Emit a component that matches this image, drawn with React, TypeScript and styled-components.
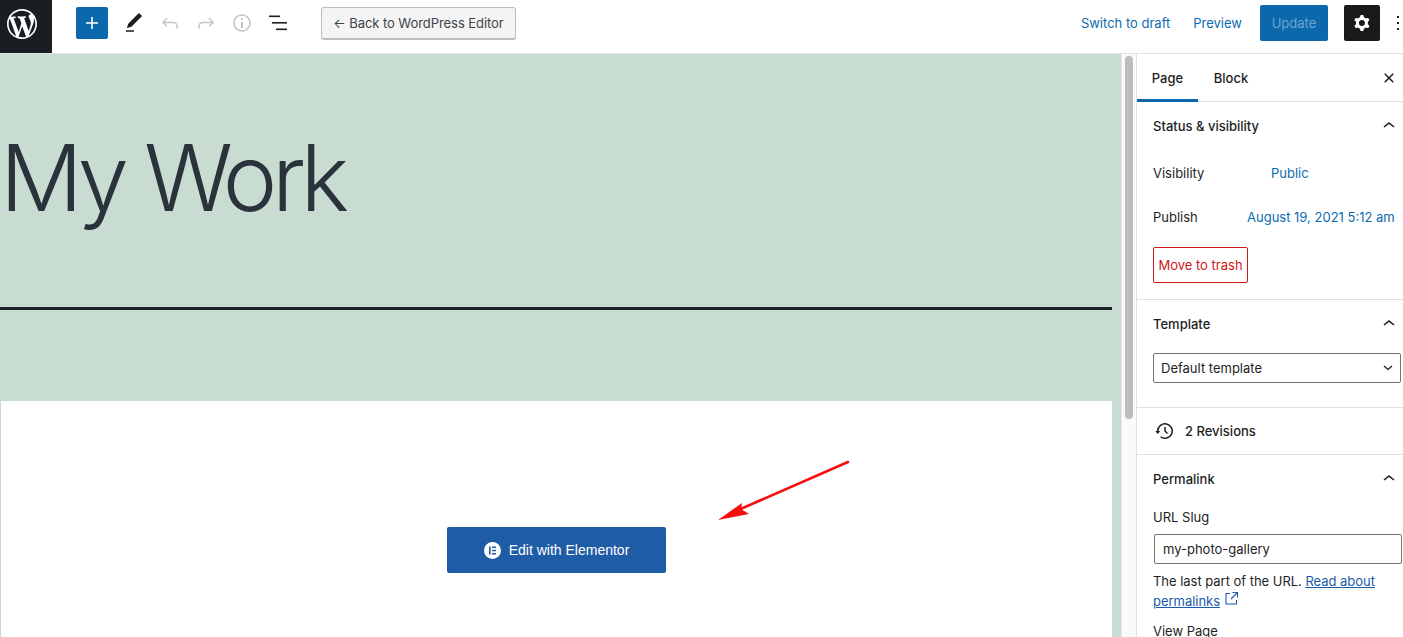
import styled, { createGlobalStyle } from 'styled-components';

const GlobalStyle = createGlobalStyle`
  html, body {
    margin: 0;
    padding: 0;
    height: 100%;
    overflow: hidden;
    background: #fff;
    font-family: 'Inter', 'Liberation Sans', sans-serif;
    font-size: 13px;
    color: #1e1e1e;
  }
  * { box-sizing: border-box; }
`;

const Page = styled.div`
  width: 1403px;
  height: 637px;
  display: flex;
  flex-direction: column;
  overflow: hidden;
`;

const TopBar = styled.header`
  height: 54px;
  flex-shrink: 0;
  display: flex;
  align-items: flex-start;
  border-bottom: 1px solid #e0e0e0;
`;

const LogoTile = styled.div`
  width: 52px;
  height: 53px;
  background: #191e23;
  display: flex;
  align-items: center;
  justify-content: center;
  padding: 0 8px 5px 0;
`;

const ToolGroup = styled.div`
  height: 46px;
  display: flex;
  align-items: center;
`;

const PlusButton = styled.button`
  width: 32px;
  height: 32px;
  margin: 0 8px 0 24px;
  padding: 0;
  border: 0;
  border-radius: 2px;
  background: #0b68ad;
  display: flex;
  align-items: center;
  justify-content: center;
`;

const ToolIcon = styled.div`
  width: 36px;
  height: 36px;
  display: flex;
  align-items: center;
  justify-content: center;
`;

const BackButton = styled.button`
  width: 195px;
  height: 33px;
  margin-left: 25px;
  padding: 0;
  background: #f4f4f4;
  border: 1px solid #bdbdbd;
  border-bottom-width: 2px;
  border-radius: 3px;
  font: 400 13px 'Inter', 'Liberation Sans', sans-serif;
  letter-spacing: -0.06px;
  color: #3c434a;
`;

const RightGroup = styled.div`
  height: 46px;
  margin-left: auto;
  display: flex;
  align-items: center;
`;

const TextLink = styled.a<{ $gap: number }>`
  color: #0b6cb0;
  font-size: 13px;
  margin-right: ${({ $gap }) => $gap}px;
`;

const UpdateButton = styled.button`
  width: 68px;
  height: 36px;
  padding: 0;
  border: 0;
  border-radius: 2px;
  background: #0b68ad;
  color: #6ea5d0;
  font: 400 13px 'Inter', 'Liberation Sans', sans-serif;
`;

const GearButton = styled.button`
  width: 36px;
  height: 36px;
  margin-left: 16px;
  padding: 0;
  border: 0;
  border-radius: 2px;
  background: #1a1a1a;
  display: flex;
  align-items: center;
  justify-content: center;
`;

const DotsSlot = styled.div`
  width: 23px;
  display: flex;
  justify-content: flex-end;
  padding-right: 2px;
`;

const Body = styled.div`
  flex: 1;
  min-height: 0;
  display: flex;
`;

const Editor = styled.main`
  width: 1121px;
  flex-shrink: 0;
  background: #c9dcd2;
  overflow: hidden;
`;

const Hero = styled.div`
  height: 347px;
  padding-top: 66px;
`;

const Title = styled.h1`
  margin: 0;
  height: 115px;
  font: 300 92px/115px 'Inter', 'Liberation Sans', sans-serif;
  letter-spacing: -5.4px;
  color: #2a323c;
`;

const Divider = styled.div`
  width: 1112px;
  height: 3px;
  margin-top: 72px;
  background: #1c2226;
`;

const Canvas = styled.div`
  position: relative;
  width: 1111px;
  height: 240px;
  margin-left: 1px;
  background: #fff;
  display: flex;
  justify-content: center;
  align-items: flex-start;
  padding-top: 126px;
`;

const ElementorButton = styled.button`
  width: 219px;
  height: 46px;
  padding: 0;
  border: 0;
  border-radius: 2px;
  background: #1f5ca6;
  color: #fff;
  font: 400 14px 'Liberation Sans', Arial, sans-serif;
  display: flex;
  align-items: center;
  justify-content: center;
  gap: 8px;
`;

const ArrowMark = styled.svg`
  position: absolute;
  left: 700px;
  top: 50px;
`;

const ScrollTrack = styled.div`
  width: 15px;
  flex-shrink: 0;
  background: #fafafa;
  border-left: 1px solid #e8e8e8;
  padding: 2px 3px 0;
`;

const ScrollThumb = styled.div`
  width: 8px;
  height: 363px;
  border-radius: 4px;
  background: #bdbdbd;
`;

const Sidebar = styled.aside`
  flex: 1;
  min-width: 0;
  border-left: 1px solid #e0e0e0;
  overflow: hidden;
`;

const Tabs = styled.div`
  height: 48px;
  display: flex;
  border-bottom: 1px solid #e0e0e0;
  position: relative;
`;

const Tab = styled.div<{ $active?: boolean; $width: number }>`
  width: ${({ $width }) => $width}px;
  height: 48px;
  display: flex;
  align-items: center;
  justify-content: center;
  font-weight: 500;
  border-bottom: 3px solid ${({ $active }) => ($active ? '#0b68ad' : 'transparent')};
  padding-top: 3px;
`;

const CloseSlot = styled.div`
  margin-left: auto;
  width: 26px;
  height: 47px;
  display: flex;
  align-items: center;
  padding-top: 1px;
`;

const Section = styled.section<{ $pad?: number }>`
  padding: 0 0 ${({ $pad }) => $pad ?? 0}px 16px;
  border-bottom: 1px solid #e0e0e0;
`;

const SectionHeader = styled.div`
  height: 48px;
  display: flex;
  align-items: center;
  justify-content: space-between;
  font-weight: 500;
  padding-right: 2px;
`;

const InfoList = styled.div`
  padding-top: 1px;
`;

const InfoRow = styled.div`
  height: 44px;
  display: flex;
  align-items: center;
  padding-right: 8px;
`;

const InfoLabel = styled.span<{ $width: number }>`
  width: ${({ $width }) => $width}px;
  flex-shrink: 0;
`;

const InfoValue = styled.a`
  flex: 1;
  color: #0b6cb0;
  white-space: nowrap;
`;

const DangerButton = styled.button`
  display: block;
  width: 95px;
  height: 36px;
  margin-top: 8px;
  padding: 0;
  background: #fff;
  border: 1px solid #cc1818;
  border-radius: 2px;
  color: #cc1818;
  font: 400 13px 'Inter', 'Liberation Sans', sans-serif;
  white-space: nowrap;
`;

const SelectBox = styled.div`
  width: 248px;
  height: 30px;
  margin-top: 5px;
  padding: 0 7px;
  display: flex;
  align-items: center;
  justify-content: space-between;
  border: 1px solid #757575;
  border-radius: 2px;
`;

const RevisionRow = styled.div`
  height: 46px;
  display: flex;
  align-items: center;
  gap: 8px;
  font-weight: 500;
`;

const FieldLabel = styled.div`
  height: 16px;
  line-height: 16px;
  margin-top: 6px;
`;

const SlugInput = styled.div`
  width: 248px;
  height: 30px;
  margin: 9px 0 0 1px;
  padding: 0 8px;
  display: flex;
  align-items: center;
  border: 1px solid #757575;
  border-radius: 2px;
`;

const HelpText = styled.p`
  margin: 8px 0 0;
  width: 240px;
  line-height: 19px;
  letter-spacing: -0.03px;
`;

const HelpLink = styled.a`
  color: #1a5aa8;
  text-decoration: underline;
`;

const ViewPage = styled.div`
  margin-top: 12px;
`;

const UndoPath = 'M18.3 11.7c-.6-.6-1.4-.9-2.3-.9H6.7l2.9-3.3-1.1-1-4.5 5L8.5 16l1-1-2.7-2.7H16c.5 0 .9.2 1.3.5 1 1 1 3.4 1 4.5v.3h1.5v-.2c0-1.5 0-4.3-1.5-5.7z';
const RedoPath = 'M15.6 6.5l-1.1 1 2.9 3.3H8c-.9 0-1.7.3-2.3.9-1.4 1.5-1.4 4.2-1.4 5.6v.2h1.5v-.3c0-1.1 0-3.5 1-4.5.3-.3.7-.5 1.3-.5h9.2L14.5 15l1.1 1.1 4.6-4.6-4.6-5z';
const InfoPath = 'M12 3.2c-4.8 0-8.8 3.9-8.8 8.8 0 4.8 3.9 8.8 8.8 8.8 4.8 0 8.8-3.9 8.8-8.8 0-4.8-4-8.8-8.8-8.8zm0 16c-4 0-7.2-3.3-7.2-7.2C4.8 8 8 4.8 12 4.8s7.2 3.3 7.2 7.2c0 4-3.2 7.2-7.2 7.2zM11 17h2v-6h-2v6zm0-8h2V7h-2v2z';
const CogPath = 'M10.289 4.836A1 1 0 0111.275 4h1.306a1 1 0 01.987.836l.244 1.466c.787.26 1.503.679 2.108 1.218l1.393-.522a1 1 0 011.216.437l.653 1.13a1 1 0 01-.23 1.273l-1.148.944a6.025 6.025 0 010 2.435l1.149.946a1 1 0 01.23 1.272l-.653 1.13a1 1 0 01-1.216.437l-1.394-.522c-.605.54-1.32.958-2.108 1.218l-.244 1.466a1 1 0 01-.987.836h-1.306a1 1 0 01-.986-.836l-.244-1.466a5.995 5.995 0 01-2.108-1.218l-1.394.522a1 1 0 01-1.217-.436l-.653-1.131a1 1 0 01.23-1.272l1.149-.946a6.026 6.026 0 010-2.435l-1.148-.944a1 1 0 01-.23-1.272l.653-1.131a1 1 0 011.217-.437l1.393.522a5.994 5.994 0 012.108-1.218l.244-1.466zM14.929 12a3 3 0 11-6 0 3 3 0 016 0z';
const ClosePath = 'M12 13.06l3.712 3.713 1.061-1.06L13.061 12l3.712-3.712-1.06-1.06L12 10.938 8.288 7.227l-1.061 1.06L10.939 12l-3.712 3.712 1.06 1.061L12 13.061z';

function Icon({ d, color = '#1e1e1e', size = 24 }: { d: string; color?: string; size?: number }) {
  return (
    <svg width={size} height={size} viewBox="0 0 24 24" fill={color} fillRule="evenodd">
      <path d={d} />
    </svg>
  );
}

function ChevronUp() {
  return <Icon d="M6.5 12.4L12 8l5.5 4.4-.9 1.2L12 10l-4.5 3.6-1-1.2z" size={24} />;
}

function ElementorIcon() {
  return (
    <svg width="17" height="17" viewBox="0 0 17 17">
      <circle cx="8.5" cy="8.5" r="8.5" fill="#fff" />
      <rect x="5" y="4.5" width="1.6" height="8" fill="#1f5ca6" />
      <rect x="8" y="4.5" width="4" height="1.5" fill="#1f5ca6" />
      <rect x="8" y="7.75" width="4" height="1.5" fill="#1f5ca6" />
      <rect x="8" y="11" width="4" height="1.5" fill="#1f5ca6" />
    </svg>
  );
}

export default function App() {
  return (
    <Page>
      <GlobalStyle />
      <TopBar>
        <LogoTile>
          <svg width="30" height="30" viewBox="0 0 20 20" fill="#fff">
            <path d="M20 10c0-5.51-4.49-10-10-10C4.48 0 0 4.49 0 10c0 5.52 4.48 10 10 10 5.51 0 10-4.48 10-10zM7.78 15.37L4.37 6.22c.55-.02 1.17-.08 1.17-.08.5-.06.44-1.13-.06-1.11 0 0-1.45.11-2.37.11-.18 0-.37 0-.58-.01C4.12 2.69 6.87 1.11 10 1.11c2.33 0 4.45.87 6.05 2.34-.68-.11-1.65.39-1.65 1.58 0 .74.45 1.36.9 2.1.35.61.55 1.36.55 2.46 0 1.49-1.4 5-1.4 5l-3.03-8.37c.54-.02.82-.17.82-.17.5-.05.44-1.25-.06-1.22 0 0-1.44.12-2.38.12-.87 0-2.33-.12-2.33-.12-.5-.03-.56 1.2-.06 1.22l.92.08 1.26 3.41zM17.41 10c.24-.64.74-1.87.43-4.25.7 1.29 1.05 2.71 1.05 4.25 0 3.29-1.73 6.24-4.4 7.78.97-2.59 1.94-5.2 2.92-7.78zM6.1 18.09C3.12 16.65 1.11 13.53 1.11 10c0-1.3.23-2.48.72-3.59C3.25 10.3 4.67 14.2 6.1 18.09zm4.03-6.63l2.58 6.98c-.86.29-1.76.45-2.71.45-.79 0-1.57-.11-2.29-.33.81-2.38 1.62-4.74 2.42-7.1z" />
          </svg>
        </LogoTile>
        <ToolGroup>
          <PlusButton>
            <Icon d="M18 11.2h-5.2V6h-1.6v5.2H6v1.6h5.2V18h1.6v-5.2H18z" color="#fff" />
          </PlusButton>
          <ToolIcon>
            <Icon d="M20.1 5.1L16.9 2 6.2 12.7l-1.3 4.4 4.5-1.3L20.1 5.1zM4 20.8h8v-1.5H4v1.5z" />
          </ToolIcon>
          <ToolIcon>
            <Icon d={UndoPath} color="#c4c4c4" />
          </ToolIcon>
          <ToolIcon>
            <Icon d={RedoPath} color="#c4c4c4" />
          </ToolIcon>
          <ToolIcon>
            <Icon d={InfoPath} color="#c4c4c4" />
          </ToolIcon>
          <ToolIcon>
            <svg width="24" height="24" viewBox="0 0 24 24" fill="#1e1e1e">
              <rect x="3" y="4.5" width="11" height="1.6" />
              <rect x="6" y="11" width="15" height="1.6" />
              <rect x="10" y="17.5" width="11" height="1.6" />
            </svg>
          </ToolIcon>
          <BackButton>← Back to WordPress Editor</BackButton>
        </ToolGroup>
        <RightGroup>
          <TextLink $gap={23}>Switch to draft</TextLink>
          <TextLink $gap={18}>Preview</TextLink>
          <UpdateButton>Update</UpdateButton>
          <GearButton>
            <Icon d={CogPath} color="#fff" />
          </GearButton>
          <DotsSlot>
            <svg width="6" height="24" viewBox="0 0 6 24" fill="#1e1e1e">
              <path d="M4 19H2v-2h2v2zm0-6H2v-2h2v2zm0-6H2V5h2v2z" />
            </svg>
          </DotsSlot>
        </RightGroup>
      </TopBar>
      <Body>
        <Editor>
          <Hero>
            <Title>My Work</Title>
            <Divider />
          </Hero>
          <Canvas>
            <ElementorButton>
              <ElementorIcon />
              Edit with Elementor
            </ElementorButton>
            <ArrowMark width="160" height="80" viewBox="0 0 160 80">
              <path d="M147 11 L35 60" stroke="#f70d0d" strokeWidth="2.6" strokeLinecap="round" />
              <path d="M17 69 L41 52 L40 58 L48 63 Z" fill="#f70d0d" />
            </ArrowMark>
          </Canvas>
        </Editor>
        <ScrollTrack>
          <ScrollThumb />
        </ScrollTrack>
        <Sidebar>
          <Tabs>
            <Tab $active $width={61}>Page</Tab>
            <Tab $width={66}>Block</Tab>
            <CloseSlot>
              <Icon d={ClosePath} />
            </CloseSlot>
          </Tabs>
          <Section $pad={16}>
            <SectionHeader>
              Status &amp; visibility
              <ChevronUp />
            </SectionHeader>
            <InfoList>
              <InfoRow>
                <InfoLabel $width={118}>Visibility</InfoLabel>
                <InfoValue>Public</InfoValue>
              </InfoRow>
              <InfoRow>
                <InfoLabel $width={94}>Publish</InfoLabel>
                <InfoValue>August 19, 2021 5:12 am</InfoValue>
              </InfoRow>
            </InfoList>
            <DangerButton>Move to trash</DangerButton>
          </Section>
          <Section $pad={24}>
            <SectionHeader>
              Template
              <ChevronUp />
            </SectionHeader>
            <SelectBox>
              Default template
              <svg width="10" height="6" viewBox="0 0 10 6" fill="none" stroke="#1e1e1e" strokeWidth="1.3">
                <path d="M1 1l4 3.5L9 1" />
              </svg>
            </SelectBox>
          </Section>
          <Section>
            <RevisionRow>
              <Icon d="M5.5 12h1.75l-2.5 3-2.5-3H4a8 8 0 113.134 6.35l.907-1.194A6.5 6.5 0 105.5 12zm9.53 1.97l-2.28-2.28V8h-1.5v4.31l2.72 2.72 1.06-1.06z" />
              2 Revisions
            </RevisionRow>
          </Section>
          <Section>
            <SectionHeader>
              Permalink
              <ChevronUp />
            </SectionHeader>
            <FieldLabel>URL Slug</FieldLabel>
            <SlugInput>my-photo-gallery</SlugInput>
            <HelpText>
              The last part of the URL. <HelpLink>Read about</HelpLink>
              <br />
              <HelpLink>permalinks</HelpLink>{' '}
              <svg width="15" height="15" viewBox="0 0 15 15" fill="none" stroke="#1a5aa8" strokeWidth="1.1">
                <path d="M6 2.5H2v10.5h10.5V9M8.5 1.5h5v5M13.5 1.5L7 8" />
              </svg>
            </HelpText>
            <ViewPage>View Page</ViewPage>
          </Section>
        </Sidebar>
      </Body>
    </Page>
  );
}
